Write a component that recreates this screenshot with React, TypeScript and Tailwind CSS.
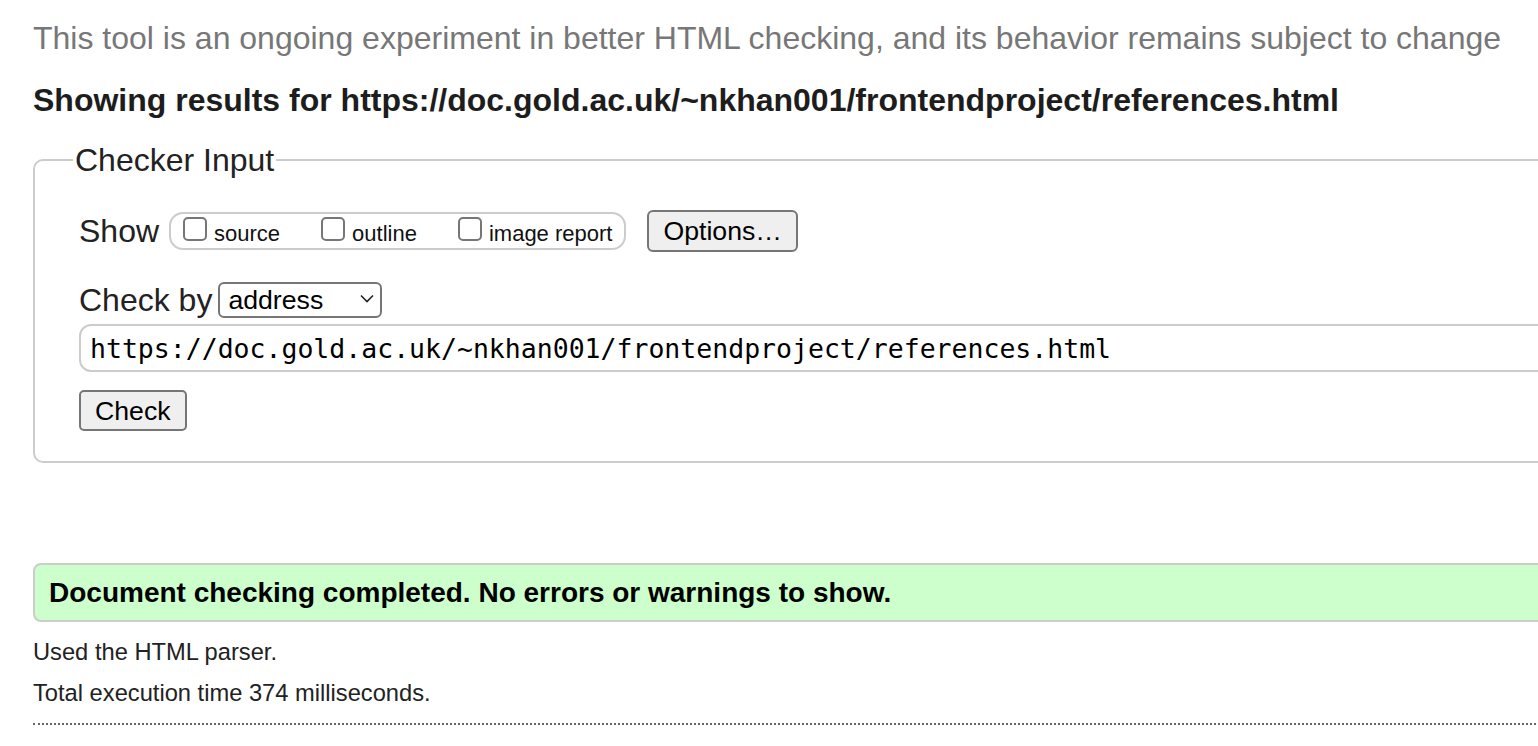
import React, { useState } from "react";

const URL = "https://doc.gold.ac.uk/~nkhan001/frontendproject/references.html";

function ShowOption({ label }: { label: string }) {
  const [checked, setChecked] = useState(false);
  return (
    <label className="flex items-baseline gap-[7px] text-[22px] leading-[24px] text-[#111]">
      <input
        type="checkbox"
        checked={checked}
        onChange={() => setChecked(!checked)}
        className="appearance-none w-[24px] h-[24px] border-2 border-[#767676] rounded-[5px] bg-white checked:bg-[#0a64d8] checked:border-[#0a64d8]"
      />
      <span>{label}</span>
    </label>
  );
}

export default function App() {
  const [mode, setMode] = useState("address");
  const [url, setUrl] = useState(URL);

  return (
    <div className="w-full h-[746px] overflow-hidden bg-white font-['Liberation_Sans',Arial,sans-serif] text-[#222]">
      <div className="w-[1620px] pl-[33px]">
        {/* Intro notice */}
        <p className="mt-[20px] text-[32px] leading-[36px] text-[#777] whitespace-nowrap">
          This tool is an ongoing experiment in better HTML checking, and its behavior remains subject to change
        </p>

        <h2 className="mt-[26px] text-[32px] leading-[36px] font-bold text-[#1d1d1d] whitespace-nowrap">
          Showing results for {URL}
        </h2>

        {/* Checker input form */}
        <fieldset className="mt-[24px] border-2 border-[#cccccc] rounded-[10px] pl-[44px] pt-[32px] pb-[30px]">
          <legend className="-ml-[6px] px-[2px] text-[32px] leading-[36px] text-[#222]">
            Checker Input
          </legend>

          <div className="flex items-center h-[42px]">
            <span className="text-[32px] leading-[36px]">Show</span>
            <div className="ml-[10px] flex items-center h-[38px] border-2 border-[#cccccc] rounded-[14px] pl-[12px] pr-[12px] gap-[41px]">
              <ShowOption label="source" />
              <ShowOption label="outline" />
              <ShowOption label="image report" />
            </div>
            <button className="ml-[21px] h-[42px] px-[14px] bg-[#efefef] border-2 border-[#767676] rounded-[6px] text-[26.67px] leading-[30px] text-black">
              Options…
            </button>
          </div>

          <div className="mt-[30px] flex items-center h-[36px]">
            <span className="text-[32px] leading-[36px]">Check by</span>
            <div className="relative ml-[6px]">
              <select
                value={mode}
                onChange={(e) => setMode(e.target.value)}
                className="appearance-none w-[164px] h-[36px] pl-[8px] border-2 border-[#767676] rounded-[6px] bg-white text-[26.67px] leading-[30px] text-black"
              >
                <option value="address">address</option>
                <option value="upload">file upload</option>
                <option value="input">text input</option>
              </select>
              <svg
                className="absolute right-[8px] top-[12px] pointer-events-none"
                width="14"
                height="9"
                viewBox="0 0 14 9"
                fill="none"
              >
                <path d="M1 1.5L7 7.5L13 1.5" stroke="#222" strokeWidth="1.6" />
              </svg>
            </div>
          </div>

          <input
            value={url}
            onChange={(e) => setUrl(e.target.value)}
            className="mt-[6px] block w-full h-[48px] pl-[9px] border-2 border-[#cccccc] rounded-[12px] bg-white font-['DejaVu_Sans_Mono',monospace] text-[26.5px] text-black outline-none"
          />

          <button className="mt-[18px] block h-[41px] px-[14px] bg-[#efefef] border-2 border-[#767676] rounded-[5px] text-[26.67px] leading-[30px] text-black">
            Check
          </button>
        </fieldset>

        {/* Result */}
        <div className="mt-[100px] h-[59px] flex items-center px-[14px] bg-[#ccffcc] border-2 border-[#cccccc] rounded-[8px]">
          <p className="text-[28px] leading-[32px] font-bold text-black whitespace-nowrap">
            Document checking completed. No errors or warnings to show.
          </p>
        </div>

        <p className="mt-[16px] text-[23.7px] leading-[28px] text-[#222]">Used the HTML parser.</p>
        <p className="mt-[13px] text-[23.7px] leading-[28px] text-[#222]">Total execution time 374 milliseconds.</p>

        <div className="mt-[16px] border-t-2 border-dotted border-[#666]" />
      </div>
    </div>
  );
}
